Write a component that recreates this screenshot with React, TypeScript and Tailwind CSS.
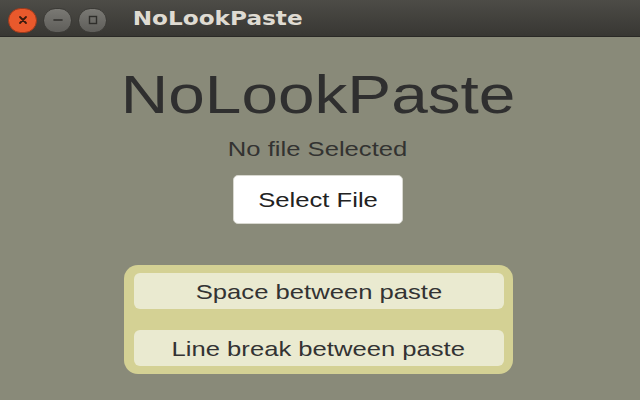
import type { ReactNode } from 'react';

// the screenshot is stretched sideways, so glyphs get widened to match
function Wide({ children, wide = false }: { children: ReactNode; wide?: boolean }) {
  return (
    <span className={wide ? 'inline-block scale-x-[1.24] whitespace-nowrap' : 'inline-block scale-x-[1.22] whitespace-nowrap'}>
      {children}
    </span>
  );
}

function TitleBar() {
  return (
    <div className="h-[37px] flex items-center bg-gradient-to-b from-[#4d4c47] to-[#383733] border-b border-[#2a2926]">
      <div className="flex items-center gap-[6px] pl-[8px] pt-[4px]">
        <span className="w-[29px] h-[25px] rounded-full bg-[#e9592c] border border-[#9c3a1c] flex items-center justify-center">
          <svg width="10" height="10" viewBox="0 0 10 10">
            <path d="M2 2 L8 8 M8 2 L2 8" stroke="#3a1a0e" strokeWidth="1.8" strokeLinecap="round" />
          </svg>
        </span>
        <span className="w-[29px] h-[25px] rounded-full bg-gradient-to-b from-[#7a7974] to-[#5f5e5a] border border-[#3b3a36] flex items-center justify-center">
          <svg width="12" height="10" viewBox="0 0 12 10">
            <path d="M2 5 L10 5" stroke="#2f2e2b" strokeWidth="1.6" strokeLinecap="round" />
          </svg>
        </span>
        <span className="w-[29px] h-[25px] rounded-full bg-gradient-to-b from-[#7a7974] to-[#5f5e5a] border border-[#3b3a36] flex items-center justify-center">
          <svg width="12" height="10" viewBox="0 0 12 10">
            <rect x="2.5" y="1.5" width="7" height="7" fill="none" stroke="#2f2e2b" strokeWidth="1.4" />
          </svg>
        </span>
      </div>
      <div className="ml-[29px] w-[164px] flex justify-center font-['DejaVu_Sans',sans-serif] font-bold text-[19px] leading-none text-[#dfdbd2]">
        <Wide>NoLookPaste</Wide>
      </div>
    </div>
  );
}

export default function App() {
  return (
    <div className="w-[640px] h-[400px] overflow-hidden bg-[#898a79] font-['Liberation_Sans',Arial,sans-serif]">
      <TitleBar />
      <div className="flex flex-col items-center pr-[4px]">
        <h1 className="mt-[31px] h-[53px] text-[53px] leading-none text-[#2f2f2f]">
          <Wide wide>NoLookPaste</Wide>
        </h1>
        <p className="mt-[17px] h-[21px] text-[21px] leading-none text-[#333331]">
          <Wide>No file Selected</Wide>
        </p>
        <button className="mt-[16px] w-[170px] h-[49px] rounded-[5px] bg-white border border-[#d8d8d0] flex items-center justify-center text-[21px] leading-none text-[#222]">
          <Wide>Select File</Wide>
        </button>
        <div className="mt-[41px] w-[389px] h-[109px] rounded-[14px] bg-[#d4d194] pt-[8px] pl-[10px] pr-[9px] flex flex-col gap-[21px]">
          <button className="h-[36px] rounded-[6px] bg-[#eaead0] flex items-center justify-center text-[21px] leading-none text-[#333]">
            <Wide>Space between paste</Wide>
          </button>
          <button className="h-[36px] rounded-[6px] bg-[#eaead0] flex items-center justify-center text-[21px] leading-none text-[#333]">
            <Wide>Line break between paste</Wide>
          </button>
        </div>
      </div>
    </div>
  );
}
